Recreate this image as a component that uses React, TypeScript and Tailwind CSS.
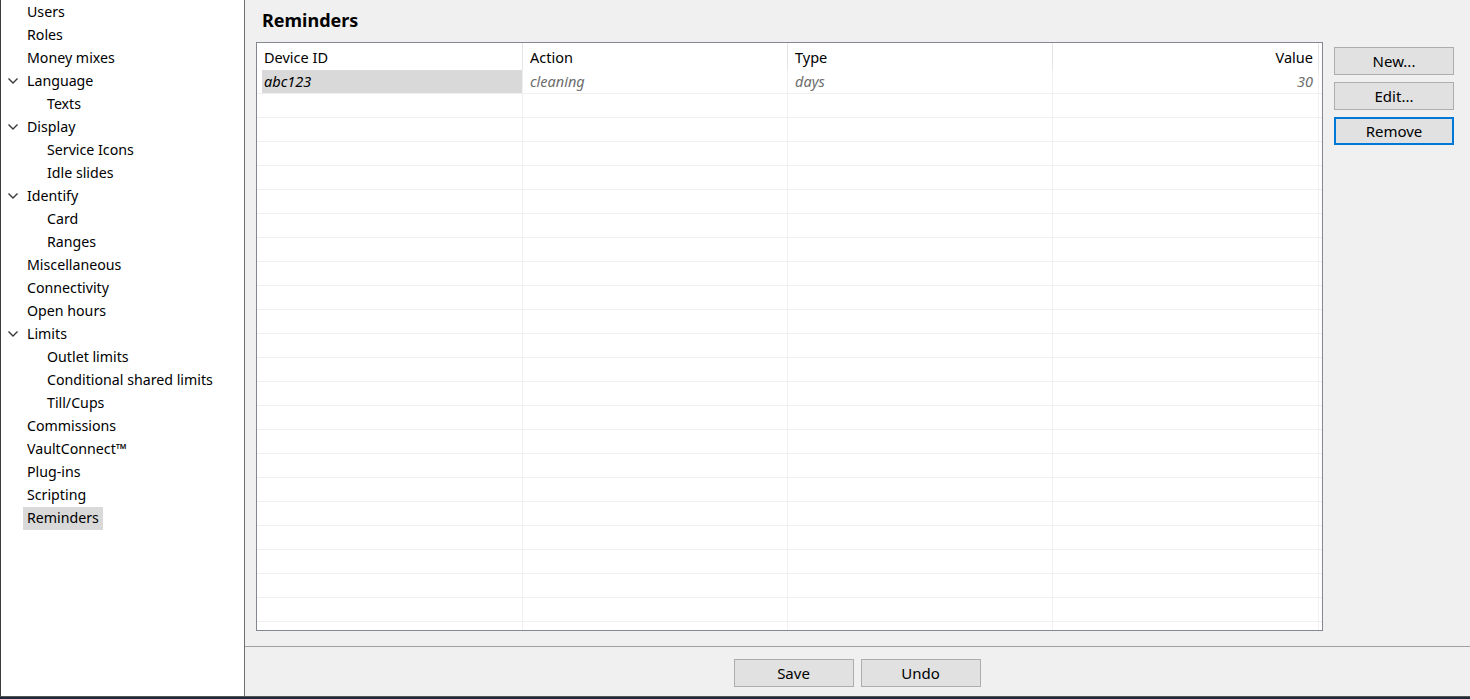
import React from 'react';

interface NavItem {
  label: string;
  level: number;
  expanded?: boolean;
  selected?: boolean;
}

const navItems: NavItem[] = [
  { label: 'Users', level: 0 },
  { label: 'Roles', level: 0 },
  { label: 'Money mixes', level: 0 },
  { label: 'Language', level: 0, expanded: true },
  { label: 'Texts', level: 1 },
  { label: 'Display', level: 0, expanded: true },
  { label: 'Service Icons', level: 1 },
  { label: 'Idle slides', level: 1 },
  { label: 'Identify', level: 0, expanded: true },
  { label: 'Card', level: 1 },
  { label: 'Ranges', level: 1 },
  { label: 'Miscellaneous', level: 0 },
  { label: 'Connectivity', level: 0 },
  { label: 'Open hours', level: 0 },
  { label: 'Limits', level: 0, expanded: true },
  { label: 'Outlet limits', level: 1 },
  { label: 'Conditional shared limits', level: 1 },
  { label: 'Till/Cups', level: 1 },
  { label: 'Commissions', level: 0 },
  { label: 'VaultConnect™', level: 0 },
  { label: 'Plug-ins', level: 0 },
  { label: 'Scripting', level: 0 },
  { label: 'Reminders', level: 0, selected: true },
];

const columns = [
  { label: 'Device ID', width: 'w-[266px]' },
  { label: 'Action', width: 'w-[265px]' },
  { label: 'Type', width: 'w-[265px]' },
  { label: 'Value', width: 'w-[266px]' },
];
const emptyRows = Array.from({ length: 23 });

function Chevron() {
  return (
    <svg width="10" height="6" viewBox="0 0 10 6" className="block">
      <polyline points="0.5,0.5 5,5 9.5,0.5" fill="none" stroke="#383838" strokeWidth="1.4" />
    </svg>
  );
}

function WinButton({ label, focused }: { label: string; focused?: boolean }) {
  return (
    <button
      className={
        'w-[120px] h-[28px] bg-[#e1e1e1] text-[15px] text-black leading-none pt-[1px] ' +
        (focused ? 'border-2 border-[#0078d7]' : 'border border-[#adadad]')
      }
    >
      {label}
    </button>
  );
}

export default function App() {
  return (
    <div className="w-[1470px] h-[699px] flex flex-col overflow-hidden bg-[#1e2a36] font-['Noto_Sans','Liberation_Sans',sans-serif]">
      <div className="flex h-[697px] border-l border-[#3c3c3c] border-b border-b-[#555]">
        {/* sidebar */}
        <div className="w-[244px] bg-white border-r border-[#6e6e6e] shrink-0">
          {navItems.map((item) => (
            <div key={item.label} className="h-[23px] flex items-center">
              <div className="w-[22px] flex justify-center pl-[2px]">
                {item.expanded && <Chevron />}
              </div>
              <div className={item.level === 1 ? 'pl-[20px]' : ''}>
                <span
                  className={
                    'inline-block px-[4px] h-[23px] leading-[22px] text-[14.2px] text-black ' +
                    (item.selected ? 'bg-[#d9d9d9]' : '')
                  }
                >
                  {item.label}
                </span>
              </div>
            </div>
          ))}
        </div>

        {/* main pane */}
        <div className="flex-1 bg-[#f0f0f0] flex flex-col">
          <div className="flex-1 flex flex-col pl-[11px] pr-[17px]">
            <h1 className="h-[42px] pl-[6px] pt-[6px] text-[18px] font-bold text-black leading-[28px]">Reminders</h1>
            <div className="flex gap-[11px]">
              <div className="w-[1067px] h-[589px] border border-[#828790] bg-white overflow-hidden">
                <div className="flex h-[27px]">
                  {columns.map((col, i) => (
                    <div
                      key={col.label}
                      className={
                        col.width +
                        ' border-r border-[#e5e5e5] flex items-center pt-[2px] text-[14.5px] text-black ' +
                        (i === 3 ? 'justify-end pr-[5px]' : 'pl-[7px]')
                      }
                    >
                      {col.label}
                    </div>
                  ))}
                </div>
                <div className="flex h-[24px] border-b border-[#f0f0f0]">
                  <div className="w-[266px] border-r border-[#f0f0f0] pl-[5px]">
                    <div className="h-full bg-[#d9d9d9] flex items-center pl-[2px] italic text-[14.5px] text-black">abc123</div>
                  </div>
                  <div className="w-[265px] border-r border-[#f0f0f0] flex items-center pl-[7px] italic text-[14.5px] text-[#6d6d6d]">cleaning</div>
                  <div className="w-[265px] border-r border-[#f0f0f0] flex items-center pl-[7px] italic text-[14.5px] text-[#6d6d6d]">days</div>
                  <div className="w-[266px] border-r border-[#f0f0f0] flex items-center justify-end pr-[5px] italic text-[14.5px] text-[#6d6d6d]">30</div>
                </div>
                {emptyRows.map((_, r) => (
                  <div key={r} className="flex h-[24px] border-b border-[#f0f0f0]">
                    {columns.map((col) => (
                      <div key={col.label} className={col.width + ' border-r border-[#f0f0f0]'} />
                    ))}
                  </div>
                ))}
              </div>
              <div className="flex flex-col gap-[7px] pt-[5px]">
                <WinButton label="New..." />
                <WinButton label="Edit..." />
                <WinButton label="Remove" focused />
              </div>
            </div>
          </div>
          <div className="h-[50px] border-t border-[#a0a0a0] flex justify-center gap-[7px] pt-[12px] pr-[2px]">
            <WinButton label="Save" />
            <WinButton label="Undo" />
          </div>
        </div>
      </div>
    </div>
  );
}
